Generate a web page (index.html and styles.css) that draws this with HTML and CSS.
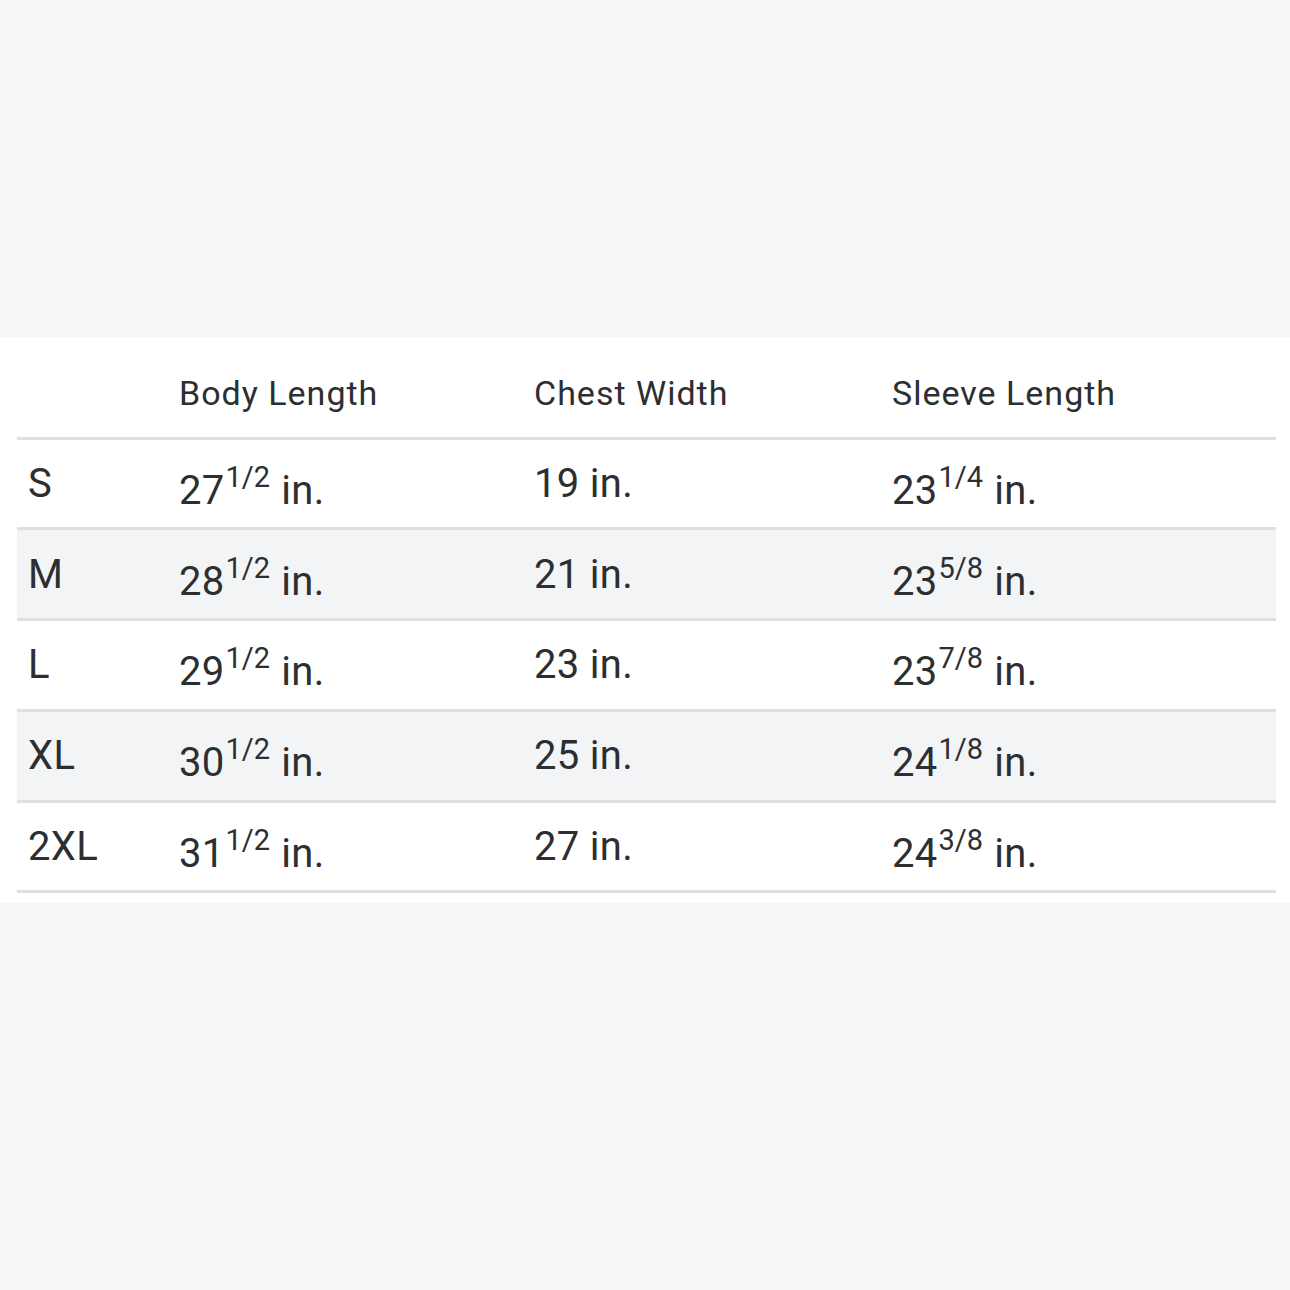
FILE: index.html
```html
<!DOCTYPE html>
<html>
<head>
<meta charset="utf-8">
<link rel="stylesheet" href="styles.css">
</head>
<body>
<div class="page">
  <div class="panel">
    <table class="sizes">
      <colgroup>
        <col class="c-size">
        <col class="c-body">
        <col class="c-chest">
        <col class="c-sleeve">
      </colgroup>
      <thead>
        <tr>
          <th></th>
          <th>Body Length</th>
          <th>Chest Width</th>
          <th>Sleeve Length</th>
        </tr>
      </thead>
      <tbody>
        <tr>
          <td>S</td>
          <td class="frac">27<sup>1/2</sup> in.</td>
          <td>19 in.</td>
          <td class="frac">23<sup>1/4</sup> in.</td>
        </tr>
        <tr class="alt">
          <td>M</td>
          <td class="frac">28<sup>1/2</sup> in.</td>
          <td>21 in.</td>
          <td class="frac">23<sup>5/8</sup> in.</td>
        </tr>
        <tr>
          <td>L</td>
          <td class="frac">29<sup>1/2</sup> in.</td>
          <td>23 in.</td>
          <td class="frac">23<sup>7/8</sup> in.</td>
        </tr>
        <tr class="alt">
          <td>XL</td>
          <td class="frac">30<sup>1/2</sup> in.</td>
          <td>25 in.</td>
          <td class="frac">24<sup>1/8</sup> in.</td>
        </tr>
        <tr>
          <td>2XL</td>
          <td class="frac">31<sup>1/2</sup> in.</td>
          <td>27 in.</td>
          <td class="frac">24<sup>3/8</sup> in.</td>
        </tr>
      </tbody>
    </table>
  </div>
</div>
</body>
</html>
```

FILE: styles.css
```css
html, body {
  margin: 0;
  padding: 0;
  background: #f8f8f8;
}
.page {
  width: 1290px;
  height: 1290px;
  padding-top: 337px;
  box-sizing: border-box;
}
.panel {
  background: #ffffff;
  padding: 0 14px 0 17px;
  height: 566px;
  box-sizing: border-box;
}
.sizes {
  border-collapse: collapse;
  table-layout: fixed;
  width: 1259px;
  font-family: Roboto, "Liberation Sans", sans-serif;
  color: #2c2f31;
}
.c-size { width: 151px; }
.c-body { width: 355px; }
.c-chest { width: 358px; }
.c-sleeve { width: 395px; }
.sizes th {
  height: 101px;
  padding: 12px 11px 0;
  text-align: left;
  font-weight: 400;
  font-size: 34px;
  letter-spacing: 1px;
  vertical-align: middle;
  border-bottom: 3px solid #dedfe0;
  box-sizing: border-box;
}
.sizes td {
  height: 90.8px;
  padding: 0 11px;
  font-size: 40px;
  vertical-align: middle;
  border-bottom: 3px solid #dedfe0;
  box-sizing: border-box;
  letter-spacing: 0.3px;
}
.sizes td.frac {
  padding-top: 14px;
}
.sizes tr.alt td {
  background: #f3f4f6;
}
.sizes sup {
  font-size: 29px;
  line-height: 0;
  vertical-align: 17px;
  letter-spacing: 0;
  margin: 0 1px 0 1px;
}
```
